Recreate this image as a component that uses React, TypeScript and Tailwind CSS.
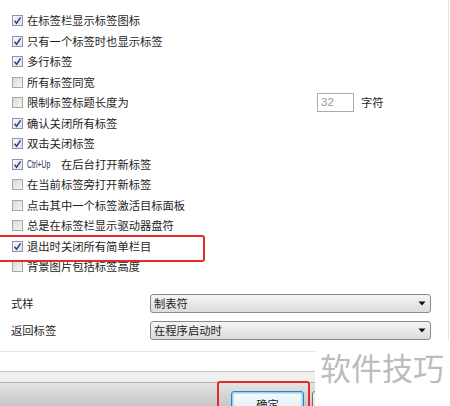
const options = [
  { label: "在标签栏显示标签图标", checked: true },
  { label: "只有一个标签时也显示标签", checked: true },
  { label: "多行标签", checked: true },
  { label: "所有标签同宽", checked: false },
  { label: "限制标签标题长度为", checked: false, limit: true },
  { label: "确认关闭所有标签", checked: true },
  { label: "双击关闭标签", checked: true },
  { label: "在后台打开新标签", checked: true, prefix: "Ctrl+Up" },
  { label: "在当前标签旁打开新标签", checked: false },
  { label: "点击其中一个标签激活目标面板", checked: false },
  { label: "总是在标签栏显示驱动器盘符", checked: false },
  { label: "退出时关闭所有简单栏目", checked: true },
  { label: "背景图片包括标签高度", checked: false },
];

function Checkbox({ checked }: { checked: boolean }) {
  return (
    <span
      className={`flex h-[11px] w-[11px] shrink-0 items-center justify-center border ${
        checked
          ? "border-[#8e95a8] bg-gradient-to-br from-[#f6f6f6] to-[#e2e4ea]"
          : "border-[#a7a7a7] bg-gradient-to-br from-[#d9d9d9] to-[#f6f6f6]"
      }`}
    >
      {checked && (
        <svg width="9" height="9" viewBox="0 0 9 9">
          <path
            d="M1.5 4.8 L3.6 7.2 L7.6 1.4"
            fill="none"
            stroke="#2c3f8f"
            strokeWidth="1.5"
          />
        </svg>
      )}
    </span>
  );
}

function Select({ value }: { value: string }) {
  return (
    <div className="flex h-[19px] w-[281px] items-center justify-between rounded-[3px] border border-[#8a8a8a] bg-gradient-to-b from-[#f5f5f5] to-[#dcdcdc] pr-[4px] pl-[3px]">
      <span>{value}</span>
      <svg width="8" height="5" viewBox="0 0 8 5">
        <path d="M0.5 0.5 L7.5 0.5 L4 4.5 Z" fill="#111" />
      </svg>
    </div>
  );
}

export default function App() {
  return (
    <div
      className="relative h-[406px] w-[450px] overflow-hidden bg-white text-[11.3px] text-[#1e1e1e]"
      style={{ fontFamily: '"Noto Sans CJK SC", "Noto Sans", sans-serif' }}
    >
      <div className="w-[449px] border-r border-b border-[#e3e3e3] pb-[11px]">
        <div className="pt-[10.5px]">
          {options.map((opt, i) => (
            <div key={i} className="flex h-[20.5px] items-center pl-3">
              <Checkbox checked={opt.checked} />
              {opt.prefix ? (
                <span className="ml-[4px] flex items-center">
                  <span className="inline-block w-[24px] text-[10.5px] text-[#253152]">
                    <span
                      className="inline-block origin-left scale-x-[0.65] whitespace-nowrap"
                      style={{ fontFamily: '"Liberation Sans", sans-serif' }}
                    >
                      {opt.prefix}
                    </span>
                  </span>
                  <span className="ml-[10px]">{opt.label}</span>
                </span>
              ) : (
                <span className={`ml-[4px] ${opt.limit ? "w-[290px]" : ""}`}>
                  {opt.label}
                </span>
              )}
              {opt.limit && (
                <>
                  <span
                    className="flex h-[19px] w-[37px] items-center border border-[#ababab] pl-[3px] text-[11.5px] text-[#9a9a9a]"
                    style={{ fontFamily: '"Liberation Sans", sans-serif' }}
                  >
                    32
                  </span>
                  <span className="ml-[7px]">字符</span>
                </>
              )}
            </div>
          ))}
        </div>

        <div className="mt-[17px] flex flex-col gap-[8px] pl-[11px]">
          <div className="flex h-[19px] items-center">
            <span className="w-[139px]">式样</span>
            <Select value="制表符" />
          </div>
          <div className="flex h-[19px] items-center">
            <span className="w-[139px]">返回标签</span>
            <Select value="在程序启动时" />
          </div>
        </div>
      </div>

      <div className="mt-[19px] h-[11px] border-t border-[#c9c9c9] bg-[#efefef]" />
      <div className="flex h-[25px] gap-2 border-t border-[#b3b3b3] bg-gradient-to-b from-[#e4e4e4] to-[#c6c6c6] pt-[8px] pl-[231px]">
        <div className="flex h-[25px] w-[73px] shrink-0 justify-center rounded-[3px] border border-[#3c7fb1] bg-gradient-to-b from-[#f4f9fc] to-[#e3eef6] pt-[4px] shadow-[inset_0_0_0_1.5px_#8fd3f5]">
          确定
        </div>
        <div className="h-[25px] w-[73px] shrink-0 rounded-[3px] border border-[#707070] bg-gradient-to-b from-[#f2f2f2] to-[#dddddd]" />
      </div>

      {/* highlight boxes */}
      <div className="absolute top-[235px] left-[-6px] h-[27px] w-[211px] rounded-[3px] border-[2.5px] border-[#e42a2a]" />
      <div className="absolute top-[381px] left-[217px] h-[40px] w-[93px] rounded-[3px] border-[2.5px] border-[#e42a2a]" />

      {/* watermark */}
      <div className="absolute top-[340px] left-[315px] h-[66px] w-[135px] bg-white pt-[11px] pl-[5px]">
        <span className="text-[31px] leading-none tracking-[0px] text-[#bcbcbc]">
          软件技巧
        </span>
      </div>
    </div>
  );
}
